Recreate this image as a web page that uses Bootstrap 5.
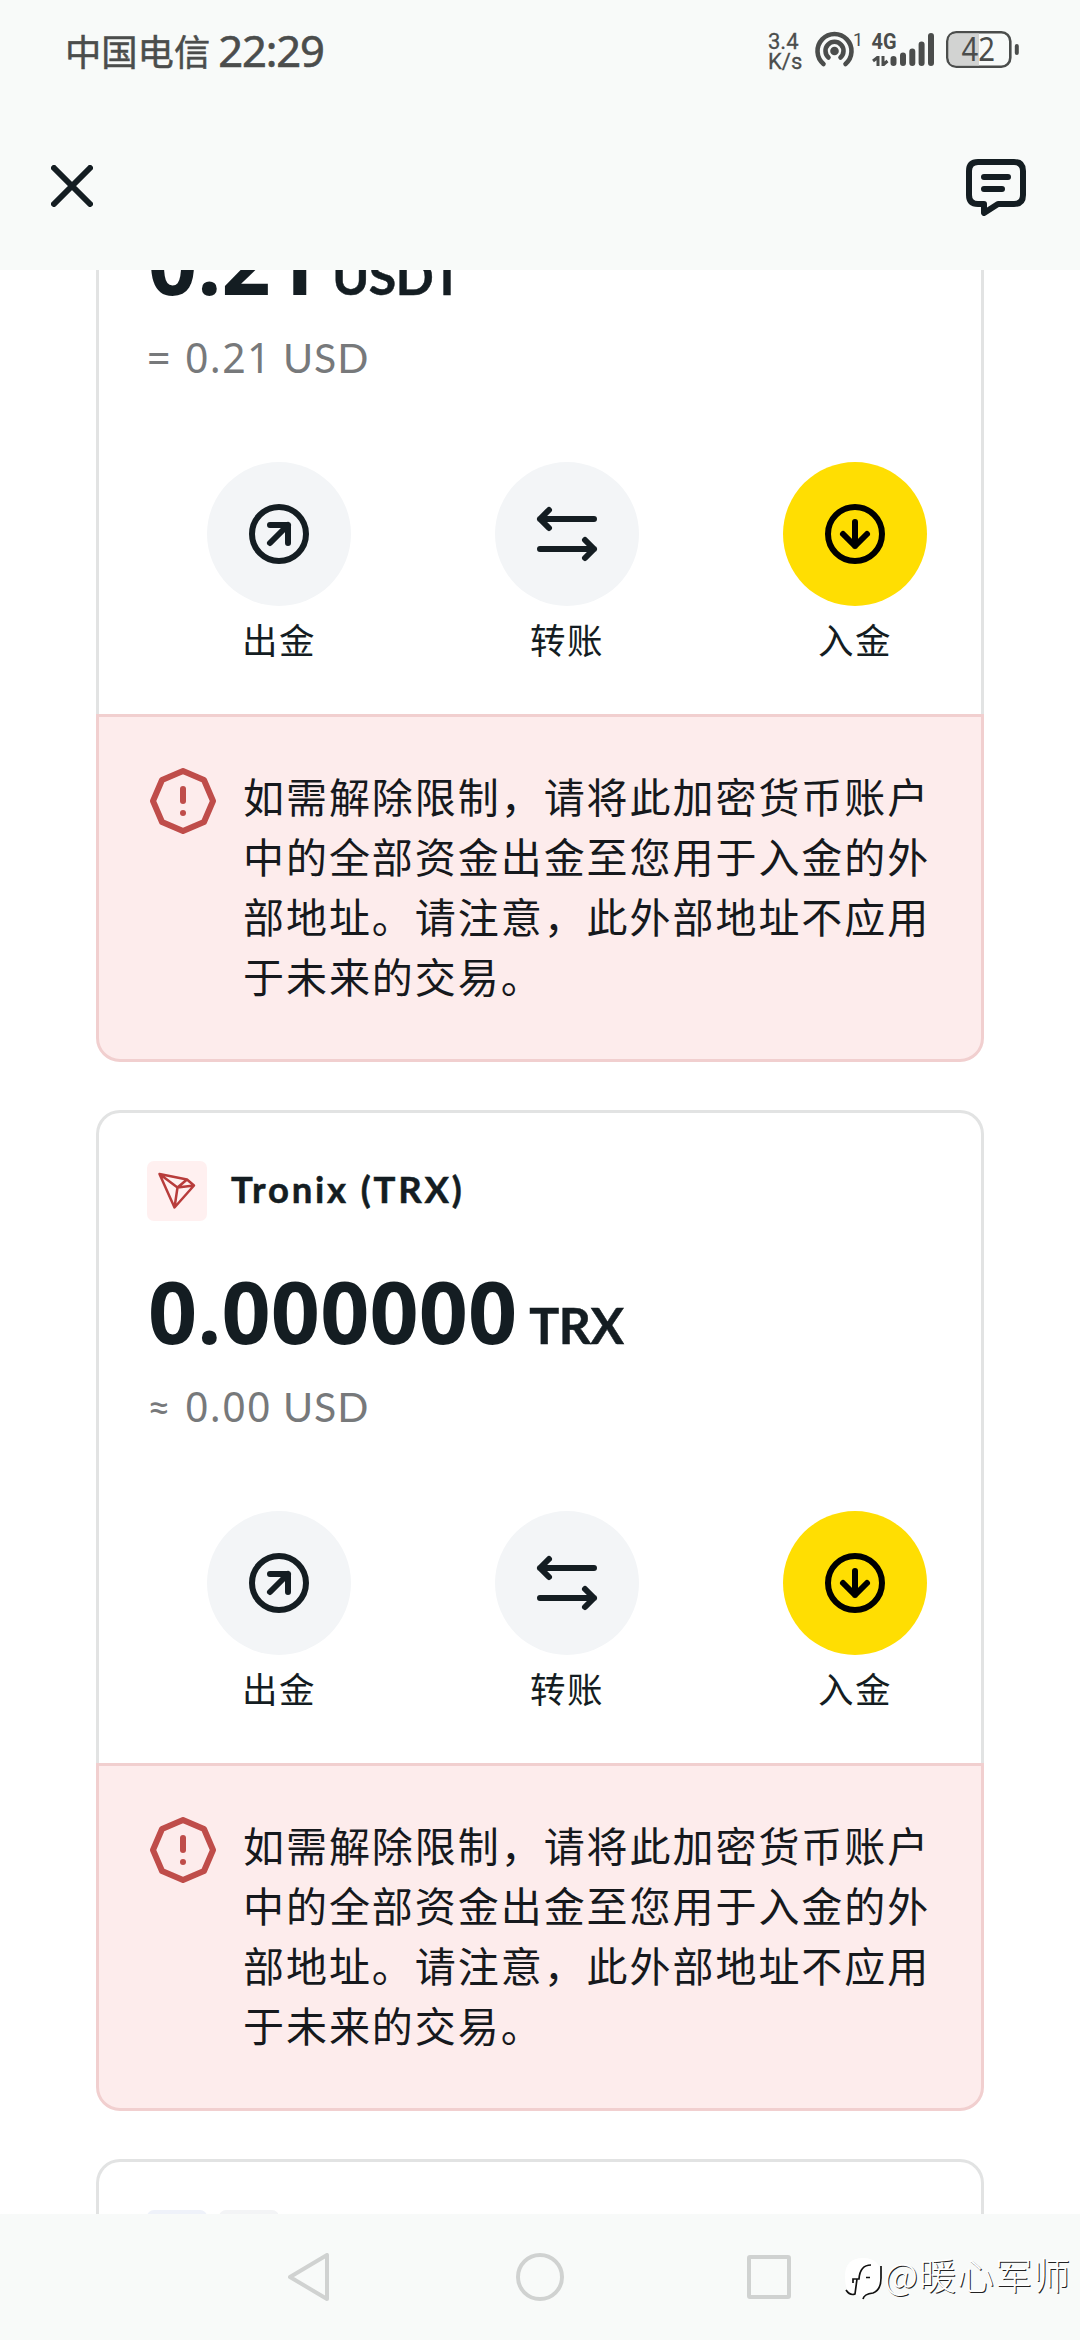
<!DOCTYPE html>
<html lang="zh-CN">
<head>
<meta charset="utf-8">
<meta name="viewport" content="width=device-width, initial-scale=1">
<title>加密货币账户</title>
<link href="https://cdn.jsdelivr.net/npm/bootstrap@5.3.0/dist/css/bootstrap.min.css" rel="stylesheet">
<style>
  body { font-family: "Noto Sans", "Noto Sans CJK SC", sans-serif; color: #141d22; background: #fff; width: 1080px; height: 2340px; overflow: hidden; }
  svg { display: block; flex: none; }
  .ink { fill: none; stroke: currentColor; stroke-width: 6; stroke-linecap: round; stroke-linejoin: round; }
  .bar-bg { background: #f8faf9; }
  .statusbar { height: 102px; padding: 0 61px 0 65px; color: #4b4d4c; }
  .carrier { font: 400 36.3px/1 "Noto Sans CJK SC", sans-serif; -webkit-text-stroke: .5px; padding-bottom: 2px; }
  .clock { font-size: 43.5px; line-height: 1; font-weight: 400; -webkit-text-stroke: .6px; letter-spacing: -1.1px; margin-left: 8px; }
  .speed { font: 400 22px/20px Roboto, sans-serif; width: 35px; padding-top: 2px; -webkit-text-stroke: .3px; }
  .appbar { height: 168px; padding: 0 54px 0 51px; }
  .feed { height: 1944px; }
  .stack { margin-top: -209px; padding: 0 96px; gap: 48px; }
  .wallet-main { height: 653px; border: 3px solid #e2e3e3; border-bottom: 0; border-radius: 24px 24px 0 0; padding: 48px; }
  .coin { width: 60px; height: 60px; border-radius: 7px; }
  .coin-trx { background: #fff0f0; } .coin-a { background: #eff2fa; } .coin-b { background: #f3f4f6; }
  .coin-name { font: 700 36.5px/57px Lato, sans-serif; margin-left: 24px; letter-spacing: 2.8px; -webkit-text-stroke: .5px; }
  .amount { font-size: 86px; line-height: 100px; font-weight: 700; margin-top: 40px; letter-spacing: .1px; padding-left: 1px; }
  .unit { font: 700 50px/1 Lato, sans-serif; margin-left: 12px; letter-spacing: -.5px; -webkit-text-stroke: .5px; }
  .approx { font-size: 41px; line-height: 60px; color: #77797b; margin-top: 15px; letter-spacing: 1.4px; }
  .sign { width: 38px; }
  .sign-near { font-family: Lato, sans-serif; }
  .cur { font-family: Lato, sans-serif; margin-left: 11px; letter-spacing: .9px; }
  .actions { margin-top: 74px; padding-left: 60px; gap: 144px; }
  .dot { width: 144px; height: 144px; border-radius: 50%; background: #f3f5f7; }
  .dot-main { background: #ffde02; color: #000; }
  .caption { font: 400 35.5px/48px "Noto Sans CJK SC", sans-serif; letter-spacing: 1.4px; margin-top: 9px; }
  .notice { height: 348px; background: #fdecec; border: 3px solid #f1cfcf; border-radius: 0 0 24px 24px; padding: 48px 48px 0 51px; gap: 27px; color: #bf4d4a; }
  .notice svg { margin-top: 3px; }
  .notice p { font: 400 41px/60px "Noto Sans CJK SC", sans-serif; letter-spacing: 1.95px; color: #16191d; width: 700px; }
  .navkeys { height: 126px; color: #d0d2d1; padding-left: 288px; }
  .navkeys .ink { stroke-width: 4; }
  .watermark { position: absolute; right: 9px; bottom: 37px; color: #fff; font: 300 37px/44px "Noto Sans CJK SC", sans-serif; text-shadow: 1px 1px 0 #222; letter-spacing: 1px; white-space: nowrap; }
  .watermark span { padding-bottom: 7px; }
</style>
</head>
<body>
<svg width="0" height="0" class="position-absolute">
  <symbol id="i-out" viewBox="0 0 66 66"><g class="ink"><circle cx="33" cy="33" r="27"/><path d="M24 24H42V42M42 24L24 42"/></g></symbol>
  <symbol id="i-swap" viewBox="0 0 66 66"><g class="ink"><path d="M60 18H6M15 9L6 18L15 27M6 48H60M51 39L60 48L51 57"/></g></symbol>
  <symbol id="i-in" viewBox="0 0 66 66"><g class="ink"><circle cx="33" cy="33" r="27"/><path d="M33 21V45M21 33L33 45L45 33"/></g></symbol>
  <symbol id="i-alert" viewBox="0 0 66 66"><g class="ink"><path d="M33 3L54 12L63 33L54 54L33 63L12 54L3 33L12 12Z"/><path d="M33 21V33"/><path d="M33 45V45.1"/></g></symbol>
</svg>

<header class="bar-bg">
  <div class="statusbar d-flex align-items-center">
    <span class="carrier">中国电信</span><span class="clock">22:29</span>
    <div class="speed ms-auto"><div>3.4</div><div>K/s</div></div>
    <svg width="218" height="44" viewBox="812 30 218 44" style="margin-left:10px;margin-right:-12px">
      <g fill="none" stroke="#4b4d4c" stroke-width="4.6" stroke-linecap="round">
        <path d="M822.5 65A17 17 0 1 1 844.500 65"/><path d="M827.5 58.500A9 9 0 1 1 839.500 58.500"/>
        <path stroke-width="6" d="M892.500 60V64M902 56.500V64M911.300 52.500V64M920.600 45.500V64M930 37V64"/>
        <path stroke-width="3" stroke-linecap="butt" d="M877 67V57M872 62L876.500 58.500M882 57V67M886.500 62L882.500 65.500"/>
        <rect x="946.300" y="33.300" width="63" height="34.500" rx="9" stroke-width="2.600"/>
        <path stroke-width="4" d="M1015.800 47V54"/>
      </g>
      <path fill="#d2d3d2" d="M978 34.600H955Q947.600 34.600 947.600 42V59Q947.600 66.500 955 66.500H978Z"/>
      <g fill="#4b4d4c"><circle cx="833.500" cy="52" r="4.300"/>
        <text x="852" y="47" font-family="Roboto" font-size="18">1</text>
        <text x="870.500" y="50" font-family="Roboto" font-weight="700" font-size="22" textLength="25" lengthAdjust="spacingAndGlyphs">4G</text>
        <text x="960.500" y="62" font-family="Noto Sans" font-size="32" textLength="33.500" lengthAdjust="spacingAndGlyphs">42</text></g>
    </svg>
  </div>
  <div class="appbar d-flex align-items-center justify-content-between">
    <svg width="42" height="42" viewBox="0 0 42 42"><path class="ink" d="M3 3L39 39M39 3L3 39"/></svg>
    <svg width="60" height="60" viewBox="0 0 60 60"><path class="ink" d="M12 6H48Q57 6 57 15V39Q57 48 48 48H32L18 57V48H12Q3 48 3 39V15Q3 6 12 6ZM18 21H42M18 33H36"/></svg>
  </div>
</header>

<main class="feed overflow-hidden">
  <div class="stack d-flex flex-column">
    <section>
      <div class="wallet-main">
        <div class="d-flex"><span class="coin coin-a"></span></div>
        <div class="amount d-flex align-items-baseline">0.21<span class="unit">USDT</span></div>
        <div class="approx d-flex align-items-baseline"><span class="sign">=</span><span>0.21</span><span class="cur">USD</span></div>
        <div class="actions d-flex text-center">
          <div><div class="dot d-flex align-items-center justify-content-center"><svg width="66" height="66"><use href="#i-out"/></svg></div><div class="caption">出金</div></div>
          <div><div class="dot d-flex align-items-center justify-content-center"><svg width="66" height="66"><use href="#i-swap"/></svg></div><div class="caption">转账</div></div>
          <div><div class="dot dot-main d-flex align-items-center justify-content-center"><svg width="66" height="66"><use href="#i-in"/></svg></div><div class="caption">入金</div></div>
        </div>
      </div>
      <div class="notice d-flex align-items-start"><svg width="66" height="66"><use href="#i-alert"/></svg><p class="m-0">如需解除限制，请将此加密货币账户<br>中的全部资金出金至您用于入金的外<br>部地址。请注意，此外部地址不应用<br>于未来的交易。</p></div>
    </section>
    <section>
      <div class="wallet-main">
        <div class="d-flex"><span class="coin coin-trx"><svg width="60" height="60" viewBox="0 0 60 60"><path d="M12.500 13L40 18.500L47 24.500L27.500 46.500ZM12.500 13L30.500 26.500L27.500 46.500M30.500 26.500L40 18.500M30.500 26.500L47 24.500" fill="none" stroke="#b83c3b" stroke-width="2.500" stroke-linejoin="round"/></svg></span><span class="coin-name">Tronix (TRX)</span></div>
        <div class="amount d-flex align-items-baseline">0.000000<span class="unit">TRX</span></div>
        <div class="approx d-flex align-items-baseline"><span class="sign sign-near">≈</span><span>0.00</span><span class="cur">USD</span></div>
        <div class="actions d-flex text-center">
          <div><div class="dot d-flex align-items-center justify-content-center"><svg width="66" height="66"><use href="#i-out"/></svg></div><div class="caption">出金</div></div>
          <div><div class="dot d-flex align-items-center justify-content-center"><svg width="66" height="66"><use href="#i-swap"/></svg></div><div class="caption">转账</div></div>
          <div><div class="dot dot-main d-flex align-items-center justify-content-center"><svg width="66" height="66"><use href="#i-in"/></svg></div><div class="caption">入金</div></div>
        </div>
      </div>
      <div class="notice d-flex align-items-start"><svg width="66" height="66"><use href="#i-alert"/></svg><p class="m-0">如需解除限制，请将此加密货币账户<br>中的全部资金出金至您用于入金的外<br>部地址。请注意，此外部地址不应用<br>于未来的交易。</p></div>
    </section>
    <section><div class="wallet-main d-flex" style="gap:12px"><span class="coin coin-a"></span><span class="coin coin-b"></span></div></section>
  </div>
</main>

<footer class="navkeys bar-bg d-flex align-items-center position-relative">
  <svg width="41" height="48" viewBox="0 0 41 48"><path class="ink" d="M39 2V46L2 24Z"/></svg>
  <svg width="48" height="48" viewBox="0 0 48 48" style="margin-left:187px"><circle class="ink" cx="24" cy="24" r="22"/></svg>
  <svg width="44" height="44" viewBox="0 0 44 44" style="margin-left:183px"><rect class="ink" x="2" y="2" width="40" height="40" rx="1"/></svg>
  <div class="watermark d-flex align-items-center">
    <svg width="40" height="44" viewBox="0 0 40 44"><path d="M5 37Q1 32 1 20Q1 2 19 2Q37 2 37 20Q37 33 31 37Q20 38 18 43Q16 38 5 37Z" fill="#fff"/><path d="M37 10V22Q37 34 29 37Q20 38 19 43M2 34Q6 40 11 38L13 23M9 27V23H15Q16 9 27 9M22 21.500H26" fill="none" stroke="#111" stroke-width="1.700"/></svg>
    <span>@暖心军师</span>
  </div>
</footer>
<script src="https://cdn.jsdelivr.net/npm/bootstrap@5.3.0/dist/js/bootstrap.bundle.min.js"></script>
</body>
</html>
